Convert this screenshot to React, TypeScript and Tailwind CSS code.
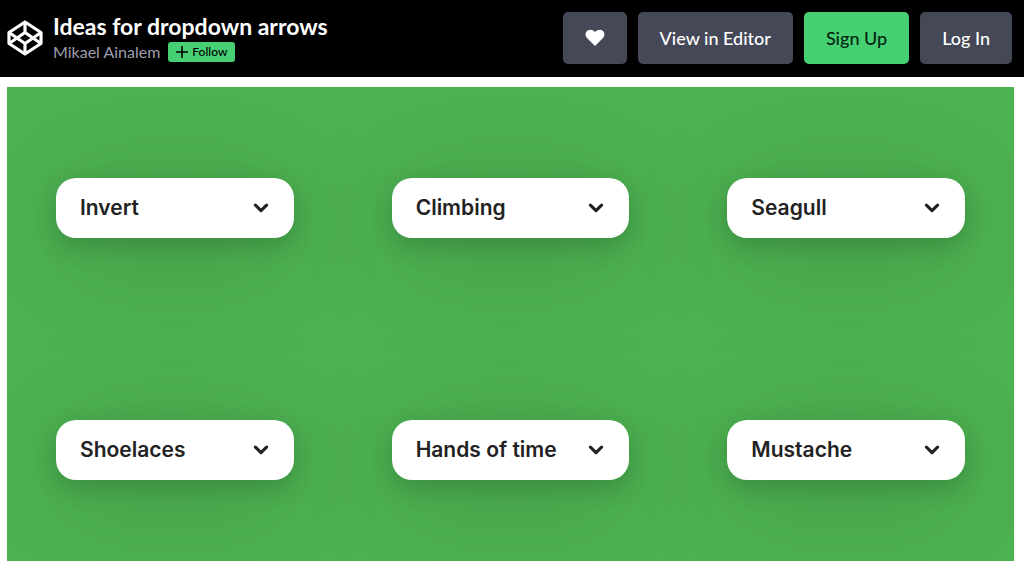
import React from "react";

const options = ["Invert", "Climbing", "Seagull", "Shoelaces", "Hands of time", "Mustache"];

function Logo() {
  return (
    <svg
      viewBox="0 0 36 36"
      className="size-9 shrink-0"
      fill="none"
      stroke="white"
      strokeWidth="3.2"
      strokeLinejoin="round"
      aria-hidden="true"
    >
      <path d="M18 2 34 12.5V23.5L18 34 2 23.5V12.5Z" />
      <path d="M2 12.5 18 23.5 34 12.5M2 23.5 18 12.5 34 23.5M18 2V12.5M18 23.5V34" />
    </svg>
  );
}

function HeaderButton({ primary = false, label, children }: { primary?: boolean; label?: string; children: React.ReactNode }) {
  return (
    <button
      type="button"
      aria-label={label}
      className={
        "flex h-[52px] items-center justify-center rounded-[5px] px-[22px] text-lg font-medium whitespace-nowrap " +
        (primary ? "bg-[#47cf73] text-[#04250f]" : "bg-[#444857] text-white")
      }
    >
      {children}
    </button>
  );
}

function Dropdown({ name }: { name: string }) {
  return (
    <button
      type="button"
      aria-haspopup="listbox"
      className="flex h-[60px] w-full items-center justify-between rounded-[20px] bg-white px-6 text-[21px] leading-8 font-semibold text-[#222] shadow-[0_8px_24px_rgba(0,0,0,0.18),0_16px_120px_rgba(0,0,0,0.16)]"
    >
      <span className="whitespace-nowrap">{name}</span>
      <svg viewBox="0 0 18 18" className="size-[18px]" fill="none" stroke="#222" strokeWidth="3.2" strokeLinecap="round" strokeLinejoin="round" aria-hidden="true">
        <path d="M3.4 6.100 9 11.600 14.600 6.100" />
      </svg>
    </button>
  );
}

export default function App() {
  return (
    <div className="flex min-h-screen flex-col bg-white">
      <header className="flex items-center justify-between bg-black pt-3 pr-3 pb-[13px] pl-[7px] font-['Lato',sans-serif]">
        <div className="flex items-center gap-[10px]">
          <Logo />
          <div>
            <h1 className="text-[23px] leading-[26px] font-bold whitespace-nowrap text-white">Ideas for dropdown arrows</h1>
            <div className="mt-px flex items-center gap-2">
              <a href="#author" className="text-base leading-6 whitespace-nowrap text-[#9b9dad]">
                Mikael Ainalem
              </a>
              <button type="button" className="flex h-5 items-center gap-1 rounded-[3px] bg-[#47cf73] px-2 text-xs leading-5 font-medium text-black">
                <svg viewBox="0 0 12 12" className="size-3" stroke="currentColor" strokeWidth="1.6" aria-hidden="true">
                  <path d="M6 0V12M0 6H12" />
                </svg>
                Follow
              </button>
            </div>
          </div>
        </div>
        <div className="flex items-center gap-[11px]">
          <HeaderButton label="Love this pen">
            <svg viewBox="0 0 20 18" className="h-[18px] w-5" fill="white" aria-hidden="true">
              <path d="M10 17 2 9C0 6.800 .1 3.700 2 2 4.200 .1 7.600 .4 10 3 12.400 .4 15.800 .1 18 2 19.900 3.700 20 6.800 18 9Z" />
            </svg>
          </HeaderButton>
          <HeaderButton>View in Editor</HeaderButton>
          <HeaderButton primary>Sign Up</HeaderButton>
          <HeaderButton>Log In</HeaderButton>
        </div>
      </header>
      <main className="mt-[10px] mr-[10px] ml-[7px] grid flex-1 grid-cols-3 content-start overflow-hidden bg-[#4db251] font-['Inter',sans-serif]">
        {options.map((name) => (
          <div key={name} className="flex h-[242px] items-center px-[49px]">
            <Dropdown name={name} />
          </div>
        ))}
      </main>
    </div>
  );
}
